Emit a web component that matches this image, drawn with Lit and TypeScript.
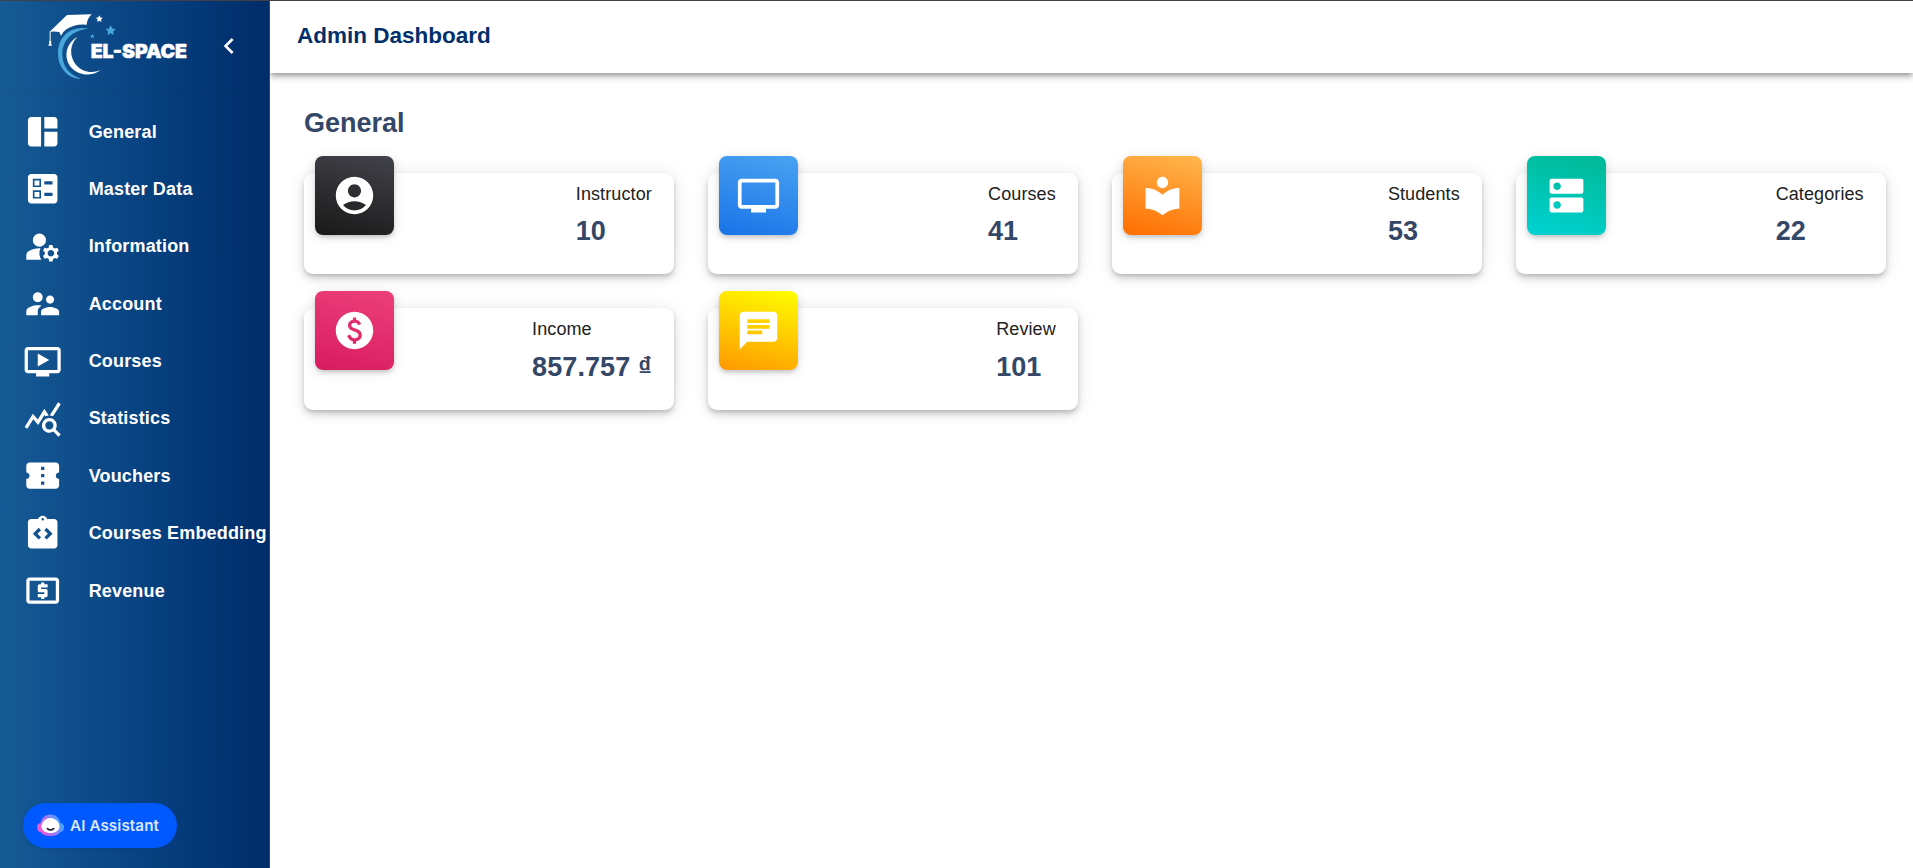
import { LitElement, html, css, svg } from "lit";
import { customElement, property } from "lit/decorators.js";

const ICONS: Record<string, string> = {
  dashboard:
    "M11 21H5c-1.1 0-2-.9-2-2V5c0-1.1.9-2 2-2h6v18zm2 0h6c1.1 0 2-.9 2-2v-7h-8v9zm8-11V5c0-1.1-.9-2-2-2h-6v7h8z",
  ballot:
    "M13 9.5h5v-2h-5v2zm0 7h5v-2h-5v2zm6 4.5H5c-1.1 0-2-.9-2-2V5c0-1.1.9-2 2-2h14c1.1 0 2 .9 2 2v14c0 1.1-.9 2-2 2zM6 11h5V6H6v5zm1-4h3v3H7V7zM6 18h5v-5H6v5zm1-4h3v3H7v-3z",
  manage:
    "M10 4a4 4 0 1 0 0 8a4 4 0 1 0 0-8zM10.67 13.02C10.45 13.01 10.23 13 10 13c-2.42 0-4.68.67-6.61 1.82-.88.52-1.39 1.5-1.39 2.53V20h9.26c-.79-1.13-1.26-2.51-1.26-4 0-1.07.25-2.07.67-2.98zM20.75 16c0-.22-.03-.42-.06-.63l1.14-1.01-1-1.73-1.45.49c-.32-.27-.68-.48-1.08-.63L18 11h-2l-.3 1.49c-.4.15-.76.36-1.08.63l-1.45-.49-1 1.73 1.14 1.01c-.03.21-.06.41-.06.63s.03.42.06.63l-1.14 1.01 1 1.73 1.45-.49c.32.27.68.48 1.08.63L16 21h2l.3-1.49c.4-.15.76-.36 1.08-.63l1.45.49 1-1.73-1.14-1.01c.03-.21.06-.41.06-.63zM17 18c-1.1 0-2-.9-2-2s.9-2 2-2 2 .9 2 2-.9 2-2 2z",
  people:
    "M16.5 12c1.38 0 2.49-1.12 2.49-2.5S17.88 7 16.5 7C15.12 7 14 8.12 14 9.5s1.12 2.5 2.5 2.5zM9 11c1.66 0 2.99-1.34 2.99-3S10.66 5 9 5C7.34 5 6 6.34 6 8s1.34 3 3 3zm7.5 3c-1.83 0-5.5.92-5.5 2.75V19h11v-2.25c0-1.83-3.67-2.75-5.5-2.75zM9 13c-2.33 0-7 1.17-7 3.5V19h7v-2.25c0-.85.33-2.34 2.37-3.47C10.5 13.1 9.66 13 9 13z",
  video:
    "M21 3H3c-1.11 0-2 .89-2 2v12c0 1.1.89 2 2 2h5v2h8v-2h5c1.1 0 1.99-.9 1.99-2L23 5c0-1.11-.9-2-2-2zm0 14H3V5h18v12zm-5-6l-7 4V7z",
  stats:
    "M19.88 18.47c.44-.7.7-1.51.7-2.39 0-2.49-2.01-4.5-4.5-4.5s-4.5 2.01-4.5 4.5 2.01 4.5 4.49 4.5c.88 0 1.7-.26 2.39-.7L21.58 23 23 21.58l-3.12-3.11zm-3.8.11c-1.38 0-2.5-1.12-2.5-2.5s1.12-2.5 2.5-2.5 2.5 1.12 2.5 2.5-1.12 2.5-2.5 2.5zm-.36-8.5c-.74.02-1.45.18-2.1.45l-.55-.83-3.8 6.18-3.01-3.52-3.63 5.81L1 17l5-8 3 3.5L13 6l2.72 4.08zm2.59.5c-.64-.28-1.33-.45-2.05-.49L21.38 2 23 3.18l-4.69 7.4z",
  ticket:
    "M22 10V6c0-1.11-.9-2-2-2H4c-1.1 0-1.99.89-1.99 2v4c1.1 0 1.99.9 1.99 2s-.89 2-2 2v4c0 1.1.9 2 2 2h16c1.1 0 2-.9 2-2v-4c-1.1 0-2-.9-2-2s.9-2 2-2zm-9 7.5h-2v-2h2v2zm0-4.5h-2v-2h2v2zm0-4.5h-2v-2h2v2z",
  code:
    "M19 3h-4.18C14.4 1.84 13.3 1 12 1s-2.4.84-2.82 2H5c-1.1 0-2 .9-2 2v14c0 1.1.9 2 2 2h14c1.1 0 2-.9 2-2V5c0-1.1-.9-2-2-2zM11 14.17l-1.41 1.42L6 12l3.59-3.59L11 9.83 8.83 12zM12 2.5a.75.75 0 1 1 0 1.5a.75.75 0 1 1 0-1.5zM13 9.83l1.41-1.42L18 12l-3.59 3.59L13 14.17 15.17 12z",
  atm:
    "M11 17h2v-1h1c.55 0 1-.45 1-1v-3c0-.55-.45-1-1-1h-3v-1h4V8h-2V7h-2v1h-1c-.55 0-1 .45-1 1v3c0 .55.45 1 1 1h3v1H9v2h2v1zm9-13H4c-1.11 0-1.99.89-1.99 2L2 18c0 1.11.89 2 2 2h16c1.11 0 2-.89 2-2V6c0-1.11-.89-2-2-2zm0 14H4V6h16v12z",
  chevron: "M15.41 7.41 14 6l-6 6 6 6 1.41-1.41L10.83 12z",
  account:
    "M12 2C6.48 2 2 6.48 2 12s4.48 10 10 10 10-4.48 10-10S17.52 2 12 2zm0 4c1.93 0 3.5 1.57 3.5 3.5S13.93 13 12 13s-3.5-1.57-3.5-3.5S10.07 6 12 6zm0 14c-2.03 0-4.43-.82-6.14-2.88C7.55 15.8 9.68 15 12 15s4.45.8 6.14 2.12C16.43 19.18 14.03 20 12 20z",
  screen:
    "M21 3H3c-1.11 0-2 .89-2 2v12c0 1.1.89 2 2 2h5v2h8v-2h5c1.1 0 1.99-.9 1.99-2L23 5c0-1.11-.9-2-2-2zm0 14H3V5h18v12z",
  library:
    "M12 11.55C9.64 9.35 6.48 8 3 8v11c3.48 0 6.64 1.35 9 3.55 2.36-2.19 5.52-3.55 9-3.55V8c-3.48 0-6.64 1.35-9 3.55zM12 8c1.66 0 3-1.34 3-3s-1.34-3-3-3-3 1.34-3 3 1.34 3 3 3z",
  dns:
    "M20 13H4c-.55 0-1 .45-1 1v6c0 .55.45 1 1 1h16c.55 0 1-.45 1-1v-6c0-.55-.45-1-1-1zM7 19c-1.1 0-2-.9-2-2s.9-2 2-2 2 .9 2 2-.9 2-2 2zM20 3H4c-.55 0-1 .45-1 1v6c0 .55.45 1 1 1h16c.55 0 1-.45 1-1V4c0-.55-.45-1-1-1zM7 9c-1.1 0-2-.9-2-2s.9-2 2-2 2 .9 2 2-.9 2-2 2z",
  paid:
    "M12 2C6.48 2 2 6.48 2 12s4.48 10 10 10 10-4.48 10-10S17.52 2 12 2zm.88 15.76V19h-1.75v-1.29c-.74-.18-2.39-.77-3.02-2.96l1.65-.67c.06.22.58 2.09 2.4 2.09.93 0 1.98-.48 1.98-1.61 0-.96-.7-1.46-2.28-2.03-1.1-.39-3.35-1.03-3.35-3.31 0-.1.01-2.4 2.62-2.96V5h1.75v1.24c1.84.32 2.51 1.79 2.66 2.23l-1.58.67c-.11-.35-.59-1.34-1.9-1.34-.7 0-1.81.37-1.81 1.39 0 .95.86 1.31 2.64 1.9 2.4.83 3.01 2.05 3.01 3.45 0 2.63-2.5 3.13-3.02 3.21z",
  chat:
    "M20 2H4c-1.1 0-1.99.9-1.99 2L2 22l4-4h14c1.1 0 2-.9 2-2V4c0-1.1-.9-2-2-2zM6 9h12v2H6V9zm8 5H6v-2h8v2zm4-6H6V6h12v2z",
};

@customElement("ui-icon")
class UiIcon extends LitElement {
  @property() name = "";
  static styles = css`
    :host { display: block; flex: none; width: 39.375px; height: 39.375px; color: #fff; }
    svg { display: block; width: 100%; height: 100%; fill: currentColor; }
  `;
  render() {
    return html`<svg viewBox="0 0 24 24" fill-rule="evenodd"><path d=${ICONS[this.name]} /></svg>`;
  }
}

@customElement("brand-logo")
class BrandLogo extends LitElement {
  static styles = css`
    :host { display: block; flex: none; width: 144px; height: 72px; }
    svg { display: block; width: 100%; height: 100%; }
    .word { font-family: Inter, "Liberation Sans", sans-serif; font-weight: 900; font-size: 57px; fill: #fff; stroke: #fff; stroke-width: 1.4; stroke-linejoin: round; }
  `;
  render() {
    return html`<svg viewBox="138 30 432 216">
      <path fill="#fff" d="M149 95 L201 45 L275 43 Q261 57 260 74 Q226 70 199 88 Q186 98 183 107 L178 96 Q164 93 149 95Z" />
      <path stroke="#fff" stroke-width="3" fill="none" d="M150.500 94V125" />
      <circle cx="150.500" cy="126" r="3.500" fill="#fff" />
      <path fill="#fff" d="M148 129h5l3 8h-11z" />
      <path fill="#48a6dc" d="M267 86 C210 74 172 112 174 164 C176 207 207 237 243 236 C208 224 188 200 187 164 C186 124 214 90 267 86Z" />
      <path fill="#fff" d="M232 111 C196 130 189 176 216 205 C239 229 277 229 302 210 C277 221 247 217 228 194 C207 169 209 133 232 111Z" />
      ${this.star(298, 57, 11, "#fff")} ${this.star(332, 92, 16, "#48a6dc")} ${this.star(277, 109, 7, "#48a6dc")}
      <text class="word" x="272" y="173.500" textLength="289" lengthAdjust="spacingAndGlyphs">EL-SPACE</text>
    </svg>`;
  }
  private star(cx: number, cy: number, r: number, fill: string) {
    const points = Array.from({ length: 10 }, (_, i) => {
      const a = (Math.PI / 5) * i - Math.PI / 2;
      const d = i % 2 ? r * 0.5 : r;
      return `${(cx + d * Math.cos(a)).toFixed(1)},${(cy + d * Math.sin(a)).toFixed(1)}`;
    }).join(" ");
    return svg`<polygon points=${points} fill=${fill} />`;
  }
}

@customElement("side-bar")
class SideBar extends LitElement {
  static styles = css`
    :host {
      display: flex; flex-direction: column; box-sizing: border-box; flex: none; position: relative; z-index: 2;
      width: 270px; padding-bottom: 20px; border-right: 1px solid #1a4c84;
      background: linear-gradient(90deg, #165b95 0%, #094382 50%, #002f6c 94%, #002d69 100%);
      color: #fff;
    }
    .brand { display: flex; align-items: flex-start; height: 92px; padding: 9px 0 0 46px; box-sizing: border-box; border-bottom: 1px solid rgba(0, 30, 80, 0.05); }
    .toggle { width: 32px; height: 32px; margin: 20.200px 0 0 22.500px; }
    nav { display: flex; flex-direction: column; margin-top: 10px; flex: 1; }
    a { display: flex; align-items: center; height: 57.375px; padding-left: 22.700px; gap: 26.600px; color: #fff; font-size: 18px; font-weight: 700; letter-spacing: 0.17px; white-space: nowrap; }
    a span { padding-top: 0.700px; }
    .assistant {
      display: flex; align-items: center; align-self: flex-start; width: 154px; height: 45px; margin-left: 23px; padding: 0 0 0 14px; gap: 6px;
      box-sizing: border-box; border: 0; border-radius: 23px; background: #0059ff; color: #d9e6ff;
      font: 600 15.200px Inter, "Liberation Sans", sans-serif; letter-spacing: 0.1px; white-space: nowrap; box-shadow: 0 1px 4px rgba(0, 50, 160, 0.2);
    }
    .face { display: block; flex: none; width: 27px; height: 23px; }
  `;
  private items = [
    ["dashboard", "General"],
    ["ballot", "Master Data"],
    ["manage", "Information"],
    ["people", "Account"],
    ["video", "Courses"],
    ["stats", "Statistics"],
    ["ticket", "Vouchers"],
    ["code", "Courses Embedding"],
    ["atm", "Revenue"],
  ];
  render() {
    return html`
      <div class="brand"><brand-logo></brand-logo><ui-icon class="toggle" name="chevron"></ui-icon></div>
      <nav>${this.items.map(([icon, label]) => html`<a><ui-icon name=${icon}></ui-icon><span>${label}</span></a>`)}</nav>
      <button class="assistant">
        <svg class="face" viewBox="0 0 27 23">
          <defs>
            <linearGradient id="halo" x1="0" x2="1" y1=".7" y2=".3">
              <stop offset="0" stop-color="#ff4fd0" /><stop offset=".45" stop-color="#a874f5" /><stop offset="1" stop-color="#27b4ff" />
            </linearGradient>
          </defs>
          <path fill="url(#halo)" d="M13.500 0.500C19 .500 22 4 23.500 9C26 9.500 27 11 27 13.500S25.500 18 23.500 18C21 21 17.500 22 13.500 22S6 21 3.500 18C1.500 18 0 16 0 13.500S1 9.500 3.500 9C5 4 8 .500 13.500 .500Z" />
          <path fill="#fff" d="M13.500 4C18.500 4 22.500 8.500 22.500 12.500S18.500 19 13.500 19S4.500 16.500 4.500 12.500S8.500 4 13.500 4Z" />
          <path fill="none" stroke="#111a2e" stroke-width="1.500" stroke-linecap="round" d="M10.300 14.600Q13.500 17.300 16.700 14.600" />
        </svg>
        <span>AI Assistant</span>
      </button>
    `;
  }
}

@customElement("stat-card")
class StatCard extends LitElement {
  @property() icon = "";
  @property() label = "";
  @property() value = "";
  @property({ reflect: true }) tone = "";
  static styles = css`
    :host {
      display: flex; justify-content: space-between; align-items: flex-start; box-sizing: border-box; height: 101.375px;
      padding: 0 22.300px 0 11.250px; border-radius: 9px; background: #fff;
      box-shadow: 0 3px 5px -1px rgba(0, 0, 0, 0.18), 0 5px 9px rgba(0, 0, 0, 0.1), 0 1px 18px rgba(0, 0, 0, 0.09);
    }
    .tile {
      display: grid; place-items: center; width: 79px; height: 79px; margin-top: -17px; border-radius: 8px;
      background: linear-gradient(195deg, var(--from), var(--to));
      box-shadow: 0 3px 4px -1px rgba(0, 0, 0, 0.18), 0 2px 12px rgba(0, 0, 0, 0.12);
    }
    :host([tone="dark"]) { --from: #42424a; --to: #191919; }
    :host([tone="blue"]) { --from: #49a3f1; --to: #1a73e8; }
    :host([tone="orange"]) { --from: #ffb74d; --to: #ff6d00; }
    :host([tone="teal"]) { --from: #00b894; --to: #00d2d3; }
    :host([tone="pink"]) { --from: #ec407a; --to: #d81b60; }
    :host([tone="yellow"]) { --from: #ffff00; --to: #ff9800; }
    ui-icon { width: 45px; height: 45px; }
    .text { display: flex; flex-direction: column; padding-top: 8px; }
    .label { font-size: 18px; line-height: 27px; letter-spacing: 0.1px; color: #212121; }
    .value { font-size: 27px; line-height: 36px; margin-top: 5.350px; font-weight: 700; color: #344767; white-space: nowrap; }
    :host([tone="pink"]) .value { letter-spacing: 0.090px; }
  `;
  render() {
    return html`
      <div class="tile"><ui-icon name=${this.icon}></ui-icon></div>
      <div class="text"><span class="label">${this.label}</span><span class="value">${this.value}</span></div>
    `;
  }
}

@customElement("app-root")
class AppRoot extends LitElement {
  static styles = css`
    :host {
      display: flex; box-sizing: border-box; width: 100%; height: 868px; border-top: 1px solid #403f4b; overflow: hidden;
      background: #fff; font-family: "Liberation Sans", Arial, sans-serif;
    }
    .page { display: flex; flex-direction: column; flex: 1; min-width: 0; }
    header {
      box-sizing: border-box; height: 72px; padding: 21px 27px 0; background: #fff;
      box-shadow: 0 2px 5px -1px rgba(0, 0, 0, 0.26), 0 4px 6px rgba(0, 0, 0, 0.18), 0 1px 11px rgba(0, 0, 0, 0.12);
    }
    h1 { margin: 0; font-size: 22.500px; line-height: 28px; color: #002f6c; }
    main { padding: 35px 27px 0 34px; }
    h2 { margin: 0 0 34.100px; font-size: 27px; line-height: 31px; color: #344767; }
    .grid { display: grid; grid-template-columns: repeat(4, 1fr); gap: 33.800px; }
  `;
  private cards = [
    ["dark", "account", "Instructor", "10"],
    ["blue", "screen", "Courses", "41"],
    ["orange", "library", "Students", "53"],
    ["teal", "dns", "Categories", "22"],
    ["pink", "paid", "Income", "857.757\u00a0₫"],
    ["yellow", "chat", "Review", "101"],
  ];
  render() {
    return html`
      <side-bar></side-bar>
      <div class="page">
        <header><h1>Admin Dashboard</h1></header>
        <main>
          <h2>General</h2>
          <section class="grid">
            ${this.cards.map(
              ([tone, icon, label, value]) =>
                html`<stat-card tone=${tone} icon=${icon} label=${label} value=${value}></stat-card>`
            )}
          </section>
        </main>
      </div>
    `;
  }
}
